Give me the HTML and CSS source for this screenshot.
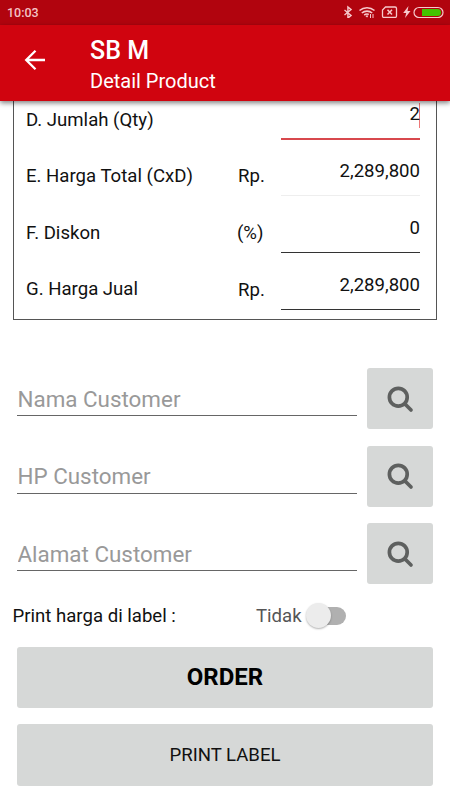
FILE: index.html
```html
<!DOCTYPE html>
<html lang="id">
<head>
  <meta charset="UTF-8" />
  <meta name="viewport" content="width=device-width, initial-scale=1" />
  <title>Detail Product</title>

  <link rel="stylesheet" href="styles.css">
</head>
<body>
  <div class="statusbar">
    <span class="clock">10:03</span>
    <svg class="status-icons" width="104" height="18" viewBox="0 0 104 18" fill="none" stroke="#f7c9cc">
      <!-- bluetooth -->
      <path d="M.7 4.2l6.600 5.400-3.200 2.700V1.200l3.200 2.600L.7 9.200" transform="translate(.8 5.800)" stroke-width="1.400" />
      <!-- wifi -->
      <path d="M16.500 10.500a11.500 11.500 0 0 1 15 0M18.800 13a8 8 0 0 1 10.400 0M21.200 15.200a4.500 4.500 0 0 1 4.600-.8" stroke-width="1.600" />
      <path d="M22.500 16.200l1.600-1.200 1 1.200-1 1.400z" fill="#f7c9cc" stroke="none" />
      <path d="M27.500 14v4M30 14v4" stroke-width="1" />
      <!-- sim -->
      <path d="M42.500 7h9.500q1.500 0 1.500 1.500v7.500q0 1.500-1.500 1.500H41q-1.500 0-1.500-1.500v-6z" stroke-width="1.300" />
      <path d="M44.500 9.800l4.500 4.800M49 9.800l-4.500 4.800" stroke-width="1.500" />
      <!-- charging -->
      <path d="M65.500 6l-5.300 7h3l-1.200 5 5.500-7h-3z" fill="#f7c9cc" stroke="none" />
      <rect x="71" y="7.500" width="29" height="10" rx="5" stroke-width="1.200" />
      <path d="M79 9h15.500a3.500 3.500 0 0 1 0 7H79z" fill="#43c300" stroke="none" />
    </svg>
  </div>

  <header class="toolbar">
    <svg class="back" width="22" height="22" viewBox="0 0 22 22" fill="none" stroke="#fff" stroke-width="2.300">
      <path d="M21 11H2.500M11.500 1.700L2.200 11l9.300 9.300" />
    </svg>
    <div class="titles">
      <h1>SB M</h1>
      <p>Detail Product</p>
    </div>
  </header>

  <main>
    <section class="price-box">
      <div class="row row-first">
        <span class="name">D. Jumlah (Qty)</span>
        <span class="unit"></span>
        <span class="value focused">2</span>
      </div>
      <div class="row row-total">
        <span class="name">E. Harga Total (CxD)</span>
        <span class="unit">Rp.</span>
        <span class="value disabled">2,289,800</span>
      </div>
      <div class="row">
        <span class="name">F. Diskon</span>
        <span class="unit percent">(%)</span>
        <span class="value">0</span>
      </div>
      <div class="row row-last">
        <span class="name">G. Harga Jual</span>
        <span class="unit">Rp.</span>
        <span class="value">2,289,800</span>
      </div>
    </section>

    <section class="customer">
      <div class="field">
        <input type="text" placeholder="Nama Customer" />
        <button class="search"><svg width="28" height="28" viewBox="0 0 28 28"><circle cx="12.300" cy="12.200" r="8.900" /><path d="M19 19l6 6" /></svg></button>
      </div>
      <div class="field">
        <input type="text" placeholder="HP Customer" />
        <button class="search"><svg width="28" height="28" viewBox="0 0 28 28"><circle cx="12.300" cy="12.200" r="8.900" /><path d="M19 19l6 6" /></svg></button>
      </div>
      <div class="field">
        <input type="text" placeholder="Alamat Customer" />
        <button class="search"><svg width="28" height="28" viewBox="0 0 28 28"><circle cx="12.300" cy="12.200" r="8.900" /><path d="M19 19l6 6" /></svg></button>
      </div>
    </section>

    <div class="print-option">
      <span class="print-label">Print harga di label :</span>
      <span class="state">Tidak</span>
      <span class="switch"><span class="thumb"></span></span>
    </div>

    <div class="actions">
      <button class="btn btn-order">ORDER</button>
      <button class="btn">PRINT LABEL</button>
    </div>
  </main>
</body>
</html>
```

FILE: styles.css
```css
:root {
  --red: #d0040f;
  --red-dark: #b1040e;
  --button: #d6d8d7;
  --icon: #5e605f;
}

* {
  box-sizing: border-box;
  margin: 0;
  padding: 0;
}

body {
  width: 450px;
  height: 800px;
  overflow: hidden;
  background: #fff;
  color: #111;
  font-family: Roboto, sans-serif;
  font-size: 18.6px;
}

.statusbar {
  display: flex;
  justify-content: space-between;
  height: 25px;
  padding-left: 7px;
  padding-right: 3px;
  background: var(--red-dark);
}

.clock {
  color: #f4c3c6;
  font-size: 12.5px;
  font-weight: 500;
  line-height: 26px;
}

.toolbar {
  position: relative;
  display: flex;
  height: 75.5px;
  padding-left: 24px;
  background: var(--red);
  color: #fff;
  box-shadow: 0 2px 5px rgba(0, 0, 0, 0.5);
}

.back {
  margin-top: 24px;
}

.titles {
  margin-left: 44px;
  padding-top: 11px;
}

.titles h1 {
  font-size: 25px;
  font-weight: 500;
  line-height: 30px;
}

.titles p {
  font-size: 20px;
  line-height: 30px;
}

.price-box {
  width: 424px;
  height: 219.5px;
  margin-left: 13px;
  padding-left: 12px;
  border: 1px solid #555;
  border-top: none;
}

.row {
  display: grid;
  grid-template-columns: 212px 43px 139px;
  align-items: end;
  height: 57px;
  line-height: 22px;
}

.row-first {
  height: 39.5px;
}

.row-total {
  height: 56px;
}

.name,
.unit {
  padding-bottom: 9px;
}

.row-last .name {
  padding-bottom: 10px;
}

.percent {
  margin-left: -1px;
}

.value {
  padding-bottom: 13px;
  border-bottom: 1px solid #333;
  text-align: right;
}

.value.focused {
  border-bottom: 2px solid #d8484d;
  background: linear-gradient(#e77, #e77) right top / 1px 25px no-repeat;
}

.value.disabled {
  border-bottom-color: #eee;
}

.customer {
  display: flex;
  flex-direction: column;
  gap: 16.5px;
  margin-top: 48px;
  padding: 0 17px;
}

.field {
  display: flex;
  justify-content: space-between;
  height: 61px;
}

.field input {
  width: 340px;
  height: 48px;
  padding-top: 14px;
  padding-left: 0.5px;
  border: none;
  border-bottom: 1px solid #666;
  outline: none;
  background: transparent;
  font-family: inherit;
  font-size: 22.4px;
}

.field input::placeholder {
  color: #999;
}

.search {
  display: flex;
  align-items: center;
  justify-content: center;
  width: 66px;
  border: none;
  border-radius: 3px;
  background: var(--button);
}

.search svg {
  fill: none;
  stroke: var(--icon);
  stroke-width: 3.7;
  stroke-linecap: round;
}

.print-option {
  display: flex;
  align-items: center;
  height: 28px;
  margin: 18px 0 16.5px 12.5px;
}

.print-label {
  width: 243.5px;
}

.state {
  width: 53px;
  color: #555;
}

.switch {
  width: 37px;
  height: 18px;
  border-radius: 9px;
  background: #b0b0b0;
}

.thumb {
  display: block;
  width: 25px;
  height: 25px;
  margin: -4px 0 0 -3px;
  border-radius: 50%;
  background: #ececec;
  box-shadow: 0 1px 2px rgba(0, 0, 0, 0.3);
}

.actions {
  display: flex;
  flex-direction: column;
  gap: 16px;
  padding: 0 17px;
}

.btn {
  height: 61.5px;
  border: none;
  border-radius: 3px;
  background: var(--button);
  color: #111;
  font-family: inherit;
  font-size: 18.6px;
}

.btn-order {
  color: #000;
  font-size: 24px;
  font-weight: 700;
}
```
